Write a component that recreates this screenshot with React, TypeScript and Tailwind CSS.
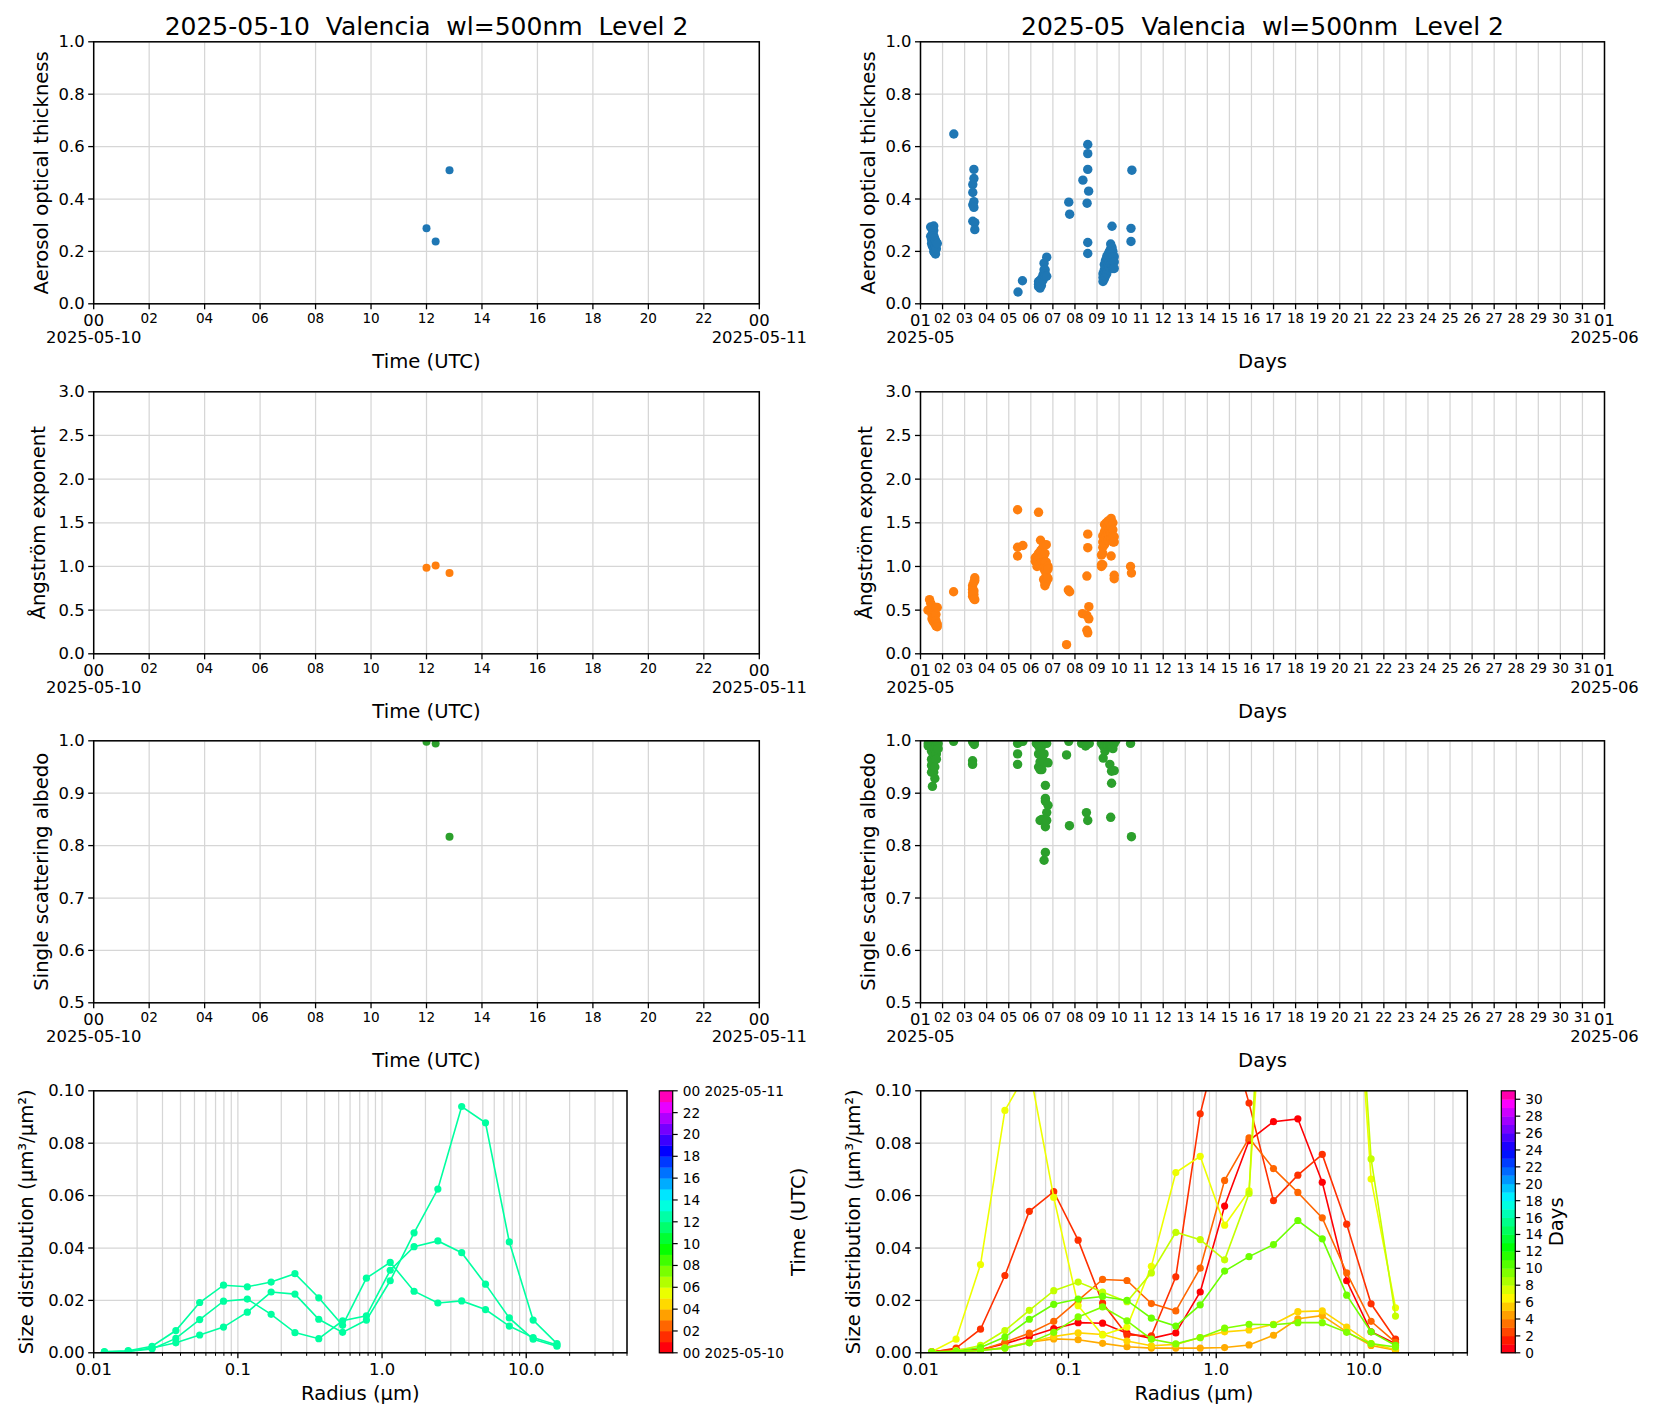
const TOP = 41.8;
const PLOT_H = 262;

// matplotlib gist_rainbow
const stops = [0, 0.03, 0.215, 0.4, 0.586, 0.77, 0.954, 1];
const reds = [1, 1, 1, 0, 0, 0, 1, 1];
const greens = [0, 0, 1, 1, 1, 0, 0, 0];
const blues = [0.16, 0, 0, 0, 1, 1, 1, 0.5];

const rainbow = (t: number) => {
    let i = 0;
    while (i < stops.length - 2 && t > stops[i + 1]) i++;
    const k = (t - stops[i]) / (stops[i + 1] - stops[i]);
    const mix = (a: number[]) => Math.round((a[i] + (a[i + 1] - a[i]) * k) * 255);
    return `rgb(${mix(reds)},${mix(greens)},${mix(blues)})`;
};

type Column = [number, number[]];
type Tick = { at: number; label: string };
type Axis = { x: number; w: number };

const flat = (cols: Column[]) => cols.flatMap(([d, vals]) => vals.map((v) => [d, v] as [number, number]));

const aodDay: [number, number][] = [[12, 0.288], [12.33, 0.238], [12.83, 0.51]];
const angDay: [number, number][] = [[12, 0.985], [12.33, 1.01], [12.83, 0.925]];
const ssaDay: [number, number][] = [[12, 0.998], [12.33, 0.995], [12.83, 0.817]];

const aodMonth = flat([
    [0.46, [0.293, 0.258]], [0.5, [0.245, 0.23]], [0.54, [0.29, 0.27, 0.25, 0.22]],
    [0.6, [0.297, 0.28, 0.26, 0.24, 0.215, 0.2]], [0.64, [0.25, 0.23, 0.21, 0.195]],
    [0.68, [0.24, 0.22, 0.19]], [0.72, [0.235, 0.21]], [0.76, [0.23]],
    [1.51, [0.648]],
    [2.37, [0.455, 0.425, 0.378, 0.315]], [2.42, [0.513, 0.478, 0.39, 0.368]], [2.46, [0.31, 0.283]],
    [4.42, [0.045]], [4.62, [0.088]],
    [5.35, [0.085, 0.075, 0.065]], [5.42, [0.09, 0.08, 0.06]], [5.48, [0.095, 0.085, 0.07]],
    [5.55, [0.11, 0.1, 0.09]], [5.6, [0.155, 0.13, 0.115, 0.105]], [5.65, [0.13, 0.115, 0.105]], [5.72, [0.178, 0.105]],
    [6.72, [0.388]], [6.76, [0.342]],
    [7.36, [0.472]], [7.55, [0.384]], [7.58, [0.608, 0.573, 0.513, 0.234, 0.192]], [7.62, [0.43]],
    [8.27, [0.115, 0.1, 0.085]], [8.33, [0.15, 0.13, 0.11, 0.095]], [8.38, [0.165, 0.14, 0.12, 0.105]],
    [8.44, [0.18, 0.16, 0.135, 0.115]], [8.5, [0.19, 0.17, 0.15, 0.13]], [8.56, [0.2, 0.18, 0.16, 0.14]],
    [8.62, [0.228, 0.21, 0.19, 0.17, 0.15]], [8.68, [0.296, 0.215, 0.19, 0.17, 0.145]],
    [8.72, [0.2, 0.18, 0.16, 0.135]], [8.78, [0.18, 0.16, 0.135]],
    [9.54, [0.288, 0.238]], [9.58, [0.51]],
]);

const angMonth = flat([
    [0.34, [0.5]], [0.41, [0.62]], [0.46, [0.58, 0.5]], [0.52, [0.55, 0.45, 0.4]], [0.58, [0.5, 0.42, 0.37]],
    [0.64, [0.48, 0.42, 0.35]], [0.7, [0.53, 0.45, 0.38, 0.32]], [0.76, [0.53, 0.34, 0.31]],
    [1.5, [0.71]],
    [2.36, [0.78, 0.74, 0.7, 0.66]], [2.42, [0.82, 0.72, 0.68, 0.63]], [2.46, [0.87, 0.84, 0.62]],
    [4.4, [1.65, 1.22, 1.12]], [4.64, [1.24]],
    [5.2, [1.1, 1.06]], [5.28, [1.12, 1.05, 1.0]], [5.35, [1.62, 1.15, 1.08, 1.02]], [5.44, [1.3, 1.18, 1.1, 1.03]],
    [5.5, [1.2, 1.1, 1.05]], [5.58, [1.25, 1.12, 1.05, 0.98, 0.85]], [5.64, [1.15, 1.05, 0.95, 0.85, 0.8, 0.78]],
    [5.7, [1.25, 1.05, 0.98, 0.9, 0.82]], [5.78, [1.0, 0.97, 0.86]],
    [6.62, [0.105]], [6.7, [0.73]], [6.76, [0.71]],
    [7.34, [0.46]], [7.54, [0.89, 0.44, 0.27]], [7.58, [1.37, 1.215, 0.24]], [7.63, [0.54, 0.4]],
    [8.2, [1.13, 1.02, 1.0]], [8.26, [1.35, 1.28, 1.22, 1.15, 1.02]], [8.34, [1.48, 1.4, 1.32, 1.25]],
    [8.42, [1.5, 1.42, 1.35, 1.3]], [8.5, [1.52, 1.45, 1.38, 1.3]], [8.56, [1.5, 1.42, 1.35]],
    [8.64, [1.55, 1.45, 1.38, 1.32, 1.12]], [8.72, [1.5, 1.42, 1.35, 1.28]], [8.78, [1.34, 1.28, 0.9, 0.86]],
    [9.52, [1.0]], [9.56, [0.925]],
]);

const ssaMonth = flat([
    [0.35, [0.995, 0.99]], [0.42, [1, 0.995]], [0.5, [1, 0.99, 0.98, 0.965, 0.953, 0.94]], [0.54, [0.96, 0.95, 0.913]],
    [0.6, [1, 0.99, 0.975, 0.96, 0.94]], [0.65, [1, 0.985, 0.965, 0.95, 0.928]], [0.72, [1, 0.99, 0.975, 0.965]], [0.8, [0.995, 0.985]],
    [1.5, [0.999]],
    [2.36, [0.998, 0.962, 0.955]], [2.44, [0.998, 0.993]],
    [4.4, [0.995, 0.975, 0.955]], [4.5, [0.998]], [4.64, [0.999]],
    [5.25, [0.995]], [5.35, [1, 0.99, 0.975, 0.95]], [5.42, [1, 0.985, 0.96, 0.945, 0.848]], [5.5, [1, 0.99, 0.975, 0.945, 0.85]],
    [5.6, [1, 0.995, 0.975, 0.96, 0.848, 0.772]], [5.66, [0.915, 0.89, 0.885, 0.85, 0.836, 0.787]],
    [5.72, [0.995, 0.863, 0.848]], [5.78, [0.958, 0.877]],
    [6.62, [0.973]], [6.72, [0.999]], [6.75, [0.838]],
    [7.3, [0.995]], [7.4, [0.995]], [7.48, [0.99]], [7.52, [0.998, 0.992, 0.863]], [7.58, [0.995, 0.848]], [7.65, [0.995]],
    [8.2, [1, 0.995]], [8.28, [1, 0.99, 0.967]], [8.36, [1, 0.99, 0.98]], [8.44, [1, 0.99]], [8.5, [1, 0.99]],
    [8.58, [1, 0.99, 0.955]], [8.62, [1, 0.99, 0.854]], [8.66, [1, 0.99, 0.942, 0.919]], [8.72, [1, 0.985]],
    [8.78, [0.995, 0.943]], [8.85, [1]],
    [9.52, [0.995]], [9.56, [0.817]],
]);

const sizeDay: { color: string; v: number[] }[] = [
    { color: '#00ffa0', v: [0.0005, 0.0008, 0.0025, 0.0085, 0.0192, 0.0258, 0.0252, 0.027, 0.0302, 0.021, 0.0105, 0.0285, 0.0345, 0.0235, 0.019, 0.0198, 0.0165, 0.0102, 0.0058, 0.003] },
    { color: '#00ffa0', v: [0.0003, 0.0006, 0.0018, 0.0038, 0.0068, 0.0098, 0.0155, 0.0232, 0.0224, 0.0128, 0.0078, 0.0125, 0.0275, 0.0458, 0.0625, 0.094, 0.0878, 0.0423, 0.0125, 0.0035] },
    { color: '#00ffa0', v: [0.0002, 0.0005, 0.0015, 0.0055, 0.0127, 0.0197, 0.0205, 0.0147, 0.0077, 0.0054, 0.0122, 0.0141, 0.0315, 0.0405, 0.0427, 0.0382, 0.0262, 0.0133, 0.0052, 0.0025] },
];

const sizeMonth: { color: string; v: number[] }[] = [
    { color: '#ff0004', v: [0.0005, 0.0012, 0.0012, 0.0035, 0.0062, 0.0092, 0.0115, 0.0113, 0.0075, 0.0055, 0.0076, 0.0232, 0.056, 0.081, 0.0882, 0.0893, 0.0651, 0.0275, 0.008, 0.0035] },
    { color: '#ff3000', v: [0.0002, 0.0018, 0.009, 0.0295, 0.054, 0.0615, 0.043, 0.019, 0.0068, 0.0065, 0.029, 0.0912, 0.128, 0.0953, 0.0581, 0.0678, 0.0757, 0.0491, 0.0187, 0.0052] },
    { color: '#ff6600', v: [0.0002, 0.0005, 0.001, 0.004, 0.0075, 0.012, 0.02, 0.028, 0.0276, 0.0188, 0.016, 0.0323, 0.0658, 0.082, 0.0703, 0.0612, 0.0515, 0.0305, 0.012, 0.004] },
    { color: '#ffab00', v: [0.0002, 0.0004, 0.001, 0.002, 0.004, 0.0053, 0.005, 0.0036, 0.0023, 0.0018, 0.0018, 0.0018, 0.002, 0.003, 0.0067, 0.013, 0.0142, 0.008, 0.0028, 0.001] },
    { color: '#ffd500', v: [0.0002, 0.0004, 0.001, 0.0018, 0.0039, 0.0062, 0.0076, 0.007, 0.0045, 0.0027, 0.0032, 0.0058, 0.008, 0.0087, 0.0109, 0.0157, 0.016, 0.0098, 0.0035, 0.0012] },
    { color: '#eeff00', v: [0.0004, 0.0052, 0.0337, 0.0925, 0.1088, 0.0593, 0.018, 0.0068, 0.0098, 0.033, 0.0688, 0.075, 0.0487, 0.0618, 0.2025, 0.25, 0.25, 0.203, 0.0663, 0.0172] },
    { color: '#c4ff00', v: [0.0003, 0.0008, 0.0028, 0.0085, 0.0162, 0.0237, 0.027, 0.0232, 0.0195, 0.0305, 0.046, 0.0432, 0.0355, 0.0608, 0.24, 0.25, 0.25, 0.215, 0.074, 0.014] },
    { color: '#6cff00', v: [0.0003, 0.0005, 0.002, 0.006, 0.0128, 0.0185, 0.0205, 0.0215, 0.02, 0.0132, 0.0102, 0.0183, 0.0312, 0.0367, 0.0413, 0.0505, 0.0435, 0.022, 0.008, 0.0028] },
    { color: '#80ff00', v: [0.0002, 0.0004, 0.0009, 0.0018, 0.0038, 0.0078, 0.0137, 0.0175, 0.0122, 0.0052, 0.0034, 0.0058, 0.0094, 0.0109, 0.0107, 0.0115, 0.0115, 0.0078, 0.0035, 0.0022] },
];

const pad2 = (n: number) => String(n).padStart(2, '0');
const range = (n: number, step = 1) => Array.from({ length: n }, (_, i) => i * step);

const Grid = ({ id, a, xs, ys }: { id: string; a: Axis; xs: number[]; ys: number[] }) => (
    <>
        <clipPath id={id}>
            <rect x={a.x} y={TOP} width={a.w} height={PLOT_H} />
        </clipPath>
        <g stroke="#d6d6d6" strokeWidth="1.25">
            {xs.map((x) => <line key={x} x1={x} x2={x} y1={TOP} y2={TOP + PLOT_H} />)}
            {ys.map((y) => <line key={y} x1={a.x} x2={a.x + a.w} y1={y} y2={y} />)}
        </g>
    </>
);

const Spines = ({ a, ticks }: { a: Axis; ticks: Tick[] }) => (
    <g>
        {ticks.map((t) => (
            <g key={t.label}>
                <line x1={a.x - 5.5} x2={a.x} y1={t.at} y2={t.at} stroke="#000" strokeWidth="1.3" />
                <text x={a.x - 9} y={t.at} dominantBaseline="central" textAnchor="end" className="text-[16.4px]">{t.label}</text>
            </g>
        ))}
        <rect x={a.x} y={TOP} width={a.w} height={PLOT_H} fill="none" stroke="#000" strokeWidth="1.5" />
    </g>
);

const YLabel = ({ x, children }: { x: number; children: string }) => (
    <text
        transform={`translate(${x} ${TOP + PLOT_H / 2}) rotate(-90)`}
        textAnchor="middle"
        dominantBaseline="central"
        className="text-[19.6px]"
    >
        {children}
    </text>
);

const yTicks = (min: number, max: number, step: number, digits: number) => {
    const out: { at: number; label: string }[] = [];
    const n = Math.round((max - min) / step);
    for (let i = 0; i <= n; i++) {
        const v = min + i * step;
        out.push({ at: TOP + PLOT_H - ((v - min) / (max - min)) * PLOT_H, label: v.toFixed(digits) });
    }
    return out;
};

type ScatterProps = {
    id: string;
    a: Axis;
    title?: string;
    yLabel: string;
    yLabelX: number;
    ymin: number;
    ymax: number;
    ystep: number;
    color: string;
    points: [number, number][];
    dot: number;
    span: number;
    tickStep: number;
    labelFor: (v: number) => string;
    startLabel: string[];
    endLabel: string[];
    xLabel: string;
};

const ScatterPanel = (p: ScatterProps) => {
    const px = (d: number) => p.a.x + (d / p.span) * p.a.w;
    const py = (v: number) => TOP + PLOT_H - ((v - p.ymin) / (p.ymax - p.ymin)) * PLOT_H;
    const vals = range(Math.round(p.span / p.tickStep) + 1, p.tickStep);
    const ticks = yTicks(p.ymin, p.ymax, p.ystep, 1);
    const bottom = TOP + PLOT_H;
    return (
        <svg width="827" height="374" className="block">
            <Grid id={p.id} a={p.a} xs={vals.map(px)} ys={ticks.map((t) => t.at)} />
            <g clipPath={`url(#${p.id})`} fill={p.color}>
                {p.points.map(([d, v], i) => <circle key={i} cx={px(d)} cy={py(v)} r={p.dot} />)}
            </g>
            {vals.map((v, i) => {
                const end = i === 0 || i === vals.length - 1;
                return (
                    <g key={v}>
                        <line x1={px(v)} x2={px(v)} y1={bottom} y2={bottom + 5.5} stroke="#000" strokeWidth="1.3" />
                        <text x={px(v)} y={bottom + (end ? 16.8 : 14)} textAnchor="middle" dominantBaseline="central" className={end ? 'text-[16.4px]' : 'text-[13.6px]'}>
                            {end ? (i === 0 ? p.startLabel[0] : p.endLabel[0]) : p.labelFor(v)}
                        </text>
                    </g>
                );
            })}
            <text x={p.a.x} y={bottom + 34} textAnchor="middle" dominantBaseline="central" className="text-[16.4px]">{p.startLabel[1]}</text>
            <text x={p.a.x + p.a.w} y={bottom + 34} textAnchor="middle" dominantBaseline="central" className="text-[16.4px]">{p.endLabel[1]}</text>
            <text x={p.a.x + p.a.w / 2} y={bottom + 57.5} textAnchor="middle" dominantBaseline="central" className="text-[19.6px]">{p.xLabel}</text>
            <Spines a={p.a} ticks={ticks} />
            <YLabel x={p.yLabelX}>{p.yLabel}</YLabel>
            {p.title && (
                <text x={p.a.x + p.a.w / 2} y="26" textAnchor="middle" dominantBaseline="central" className="whitespace-pre text-[25px]">{p.title}</text>
            )}
        </svg>
    );
};

type SizeProps = {
    id: string;
    a: Axis;
    curves: { color: string; v: number[] }[];
    bar: { x: number; w: number; bands: number; max: number; ticks: { v: number; label: string }[] };
    barLabel: string;
    barLabelX: number;
};

const SizePanel = ({ id, a, curves, bar, barLabel, barLabelX }: SizeProps) => {
    const decade = a.w / Math.log10(5000);
    const px = (r: number) => a.x + (Math.log10(r) + 2) * decade;
    const py = (v: number) => TOP + PLOT_H - (v / 0.1) * PLOT_H;
    const bottom = TOP + PLOT_H;
    const minors = [0.01, 0.1, 1, 10].flatMap((m) => [2, 3, 4, 5, 6, 7, 8, 9].map((k) => k * m)).filter((r) => r <= 50);
    const majors = [0.01, 0.1, 1, 10];
    const ticks = yTicks(0, 0.1, 0.02, 2);
    const binX = (i: number) => a.x + (-1.9257 + 0.1652 * i + 2) * decade;
    return (
        <svg width="827" height="370" className="block">
            <Grid id={id} a={a} xs={[...minors, ...majors].map(px)} ys={ticks.map((t) => t.at)} />
            <g clipPath={`url(#${id})`}>
                {curves.map((c, n) => (
                    <g key={n} fill={c.color}>
                        <polyline points={c.v.map((v, i) => `${binX(i)},${py(v)}`).join(' ')} fill="none" stroke={c.color} strokeWidth="1.6" />
                        {c.v.map((v, i) => <circle key={i} cx={binX(i)} cy={py(v)} r="3.6" />)}
                    </g>
                ))}
            </g>
            {minors.map((r) => <line key={r} x1={px(r)} x2={px(r)} y1={bottom} y2={bottom + 3} stroke="#000" strokeWidth="1" />)}
            {majors.map((r) => (
                <g key={r}>
                    <line x1={px(r)} x2={px(r)} y1={bottom} y2={bottom + 5.5} stroke="#000" strokeWidth="1.3" />
                    <text x={px(r)} y={bottom + 16.8} textAnchor="middle" dominantBaseline="central" className="text-[16.4px]">
                        {r === 0.01 ? '0.01' : r === 0.1 ? '0.1' : r.toFixed(1)}
                    </text>
                </g>
            ))}
            <text x={a.x + a.w / 2} y={bottom + 41} textAnchor="middle" dominantBaseline="central" className="text-[19.6px]">Radius (µm)</text>
            <Spines a={a} ticks={ticks} />
            <YLabel x={a.x - 67}>Size distribution (µm³/µm²)</YLabel>

            {range(bar.bands).map((i) => (
                <rect
                    key={i}
                    x={bar.x}
                    y={bottom - ((i + 1) / bar.bands) * PLOT_H}
                    width={bar.w}
                    height={PLOT_H / bar.bands + 0.4}
                    fill={rainbow((i + 0.5) / bar.bands)}
                />
            ))}
            <rect x={bar.x} y={TOP} width={bar.w} height={PLOT_H} fill="none" stroke="#000" strokeWidth="1.2" />
            {bar.ticks.map((t) => {
                const y = bottom - (t.v / bar.max) * PLOT_H;
                return (
                    <g key={t.label}>
                        <line x1={bar.x + bar.w} x2={bar.x + bar.w + 5} y1={y} y2={y} stroke="#000" strokeWidth="1.2" />
                        <text x={bar.x + bar.w + 10} y={y} dominantBaseline="central" className="whitespace-pre text-[13.7px]">{t.label}</text>
                    </g>
                );
            })}
            <YLabel x={barLabelX}>{barLabel}</YLabel>
        </svg>
    );
};

const dayAxis: Axis = { x: 93.7, w: 665.6 };
const monthAxis: Axis = { x: 93.5, w: 684 };

const hourLabel = (v: number) => pad2(v);
const dayLabel = (v: number) => pad2(v + 1);

const dayProps = {
    a: dayAxis,
    span: 24,
    tickStep: 2,
    dot: 4,
    labelFor: hourLabel,
    startLabel: ['00', '2025-05-10'],
    endLabel: ['00', '2025-05-11'],
    xLabel: 'Time (UTC)',
};

const monthProps = {
    a: monthAxis,
    span: 31,
    tickStep: 1,
    dot: 4.7,
    labelFor: dayLabel,
    startLabel: ['01', '2025-05'],
    endLabel: ['01', '2025-06'],
    xLabel: 'Days',
};

const hourTicks = [
    { v: 0, label: '00 2025-05-10' },
    ...range(11).map((i) => ({ v: (i + 1) * 2, label: pad2((i + 1) * 2) })),
    { v: 24, label: '00 2025-05-11' },
];

const dayTicks = range(16, 2).map((v) => ({ v, label: String(v) }));

export default function App() {
    return (
        <div className="grid w-[1654px] h-[1420px] grid-cols-[827px_827px] grid-rows-[349.5px_349px_350px_371.5px] bg-white fill-black font-['DejaVu_Sans',sans-serif]">
            <ScatterPanel {...dayProps} id="c1" title="2025-05-10  Valencia  wl=500nm  Level 2" yLabel="Aerosol optical thickness" yLabelX={41} ymin={0} ymax={1} ystep={0.2} color="#1f77b4" points={aodDay} />
            <ScatterPanel {...monthProps} id="c2" title="2025-05  Valencia  wl=500nm  Level 2" yLabel="Aerosol optical thickness" yLabelX={41} ymin={0} ymax={1} ystep={0.2} color="#1f77b4" points={aodMonth} />
            <ScatterPanel {...dayProps} id="c3" yLabel="Ångström exponent" yLabelX={38} ymin={0} ymax={3} ystep={0.5} color="#ff7f0e" points={angDay} />
            <ScatterPanel {...monthProps} id="c4" yLabel="Ångström exponent" yLabelX={38} ymin={0} ymax={3} ystep={0.5} color="#ff7f0e" points={angMonth} />
            <ScatterPanel {...dayProps} id="c5" yLabel="Single scattering albedo" yLabelX={41} ymin={0.5} ymax={1} ystep={0.1} color="#2ca02c" points={ssaDay} />
            <ScatterPanel {...monthProps} id="c6" yLabel="Single scattering albedo" yLabelX={41} ymin={0.5} ymax={1} ystep={0.1} color="#2ca02c" points={ssaMonth} />
            <SizePanel id="c7" a={{ x: 93.7, w: 533.3 }} curves={sizeDay} bar={{ x: 659.3, w: 13.4, bands: 24, max: 24, ticks: hourTicks }} barLabel="Time (UTC)" barLabelX={798} />
            <SizePanel id="c8" a={{ x: 93.7, w: 546.6 }} curves={sizeMonth} bar={{ x: 674.3, w: 14, bands: 31, max: 31, ticks: dayTicks }} barLabel="Days" barLabelX={729} />
        </div>
    );
}
